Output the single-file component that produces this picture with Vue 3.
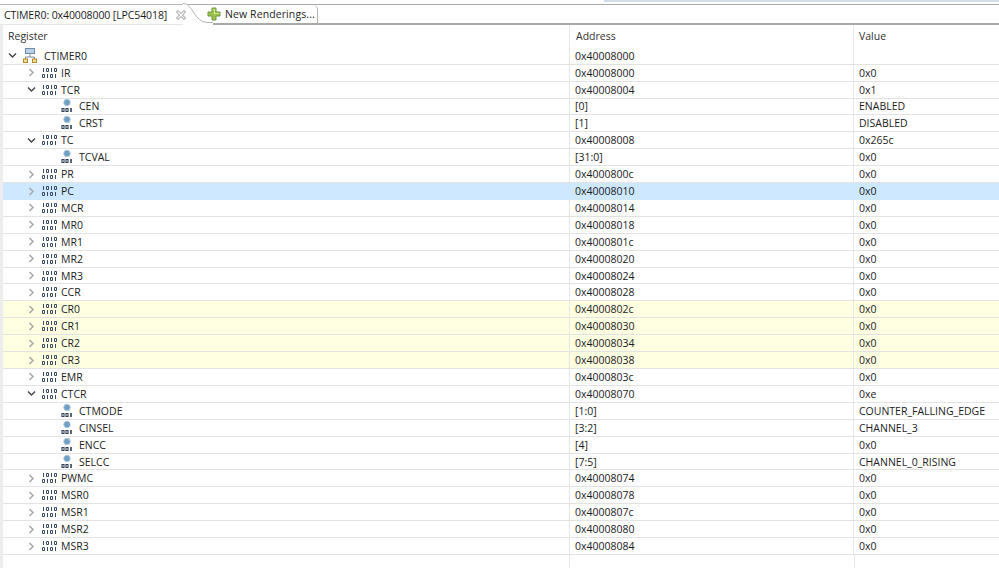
<script setup>
const rows = [
  { n: 'CTIMER0', a: '0x40008000', v: '', lvl: 0, open: true, kind: 'root' },
  { n: 'IR', a: '0x40008000', v: '0x0' },
  { n: 'TCR', a: '0x40008004', v: '0x1', open: true },
  { n: 'CEN', a: '[0]', v: 'ENABLED', kind: 'field' },
  { n: 'CRST', a: '[1]', v: 'DISABLED', kind: 'field' },
  { n: 'TC', a: '0x40008008', v: '0x265c', open: true },
  { n: 'TCVAL', a: '[31:0]', v: '0x0', kind: 'field' },
  { n: 'PR', a: '0x4000800c', v: '0x0' },
  { n: 'PC', a: '0x40008010', v: '0x0', sel: true },
  { n: 'MCR', a: '0x40008014', v: '0x0' },
  { n: 'MR0', a: '0x40008018', v: '0x0' },
  { n: 'MR1', a: '0x4000801c', v: '0x0' },
  { n: 'MR2', a: '0x40008020', v: '0x0' },
  { n: 'MR3', a: '0x40008024', v: '0x0' },
  { n: 'CCR', a: '0x40008028', v: '0x0' },
  { n: 'CR0', a: '0x4000802c', v: '0x0', warn: true },
  { n: 'CR1', a: '0x40008030', v: '0x0', warn: true },
  { n: 'CR2', a: '0x40008034', v: '0x0', warn: true },
  { n: 'CR3', a: '0x40008038', v: '0x0', warn: true },
  { n: 'EMR', a: '0x4000803c', v: '0x0' },
  { n: 'CTCR', a: '0x40008070', v: '0xe', open: true },
  { n: 'CTMODE', a: '[1:0]', v: 'COUNTER_FALLING_EDGE', kind: 'field' },
  { n: 'CINSEL', a: '[3:2]', v: 'CHANNEL_3', kind: 'field' },
  { n: 'ENCC', a: '[4]', v: '0x0', kind: 'field' },
  { n: 'SELCC', a: '[7:5]', v: 'CHANNEL_0_RISING', kind: 'field' },
  { n: 'PWMC', a: '0x40008074', v: '0x0' },
  { n: 'MSR0', a: '0x40008078', v: '0x0' },
  { n: 'MSR1', a: '0x4000807c', v: '0x0' },
  { n: 'MSR2', a: '0x40008080', v: '0x0' },
  { n: 'MSR3', a: '0x40008084', v: '0x0' },
]
</script>

<template>
  <div class="app">
    <div class="topstrip"><span class="ts-a"></span><span class="ts-b"><i class="ts-blue"></i></span></div>
    <div class="tabbar">
      <div class="tab active">
        <span class="tab-title">CTIMER0: 0x40008000 [LPC54018]</span>
        <svg class="close" width="12" height="12" viewBox="0 0 12 12">
          <path d="M1.5 3L3 1.5L6 4.5L9 1.5L10.5 3L7.5 6L10.5 9L9 10.5L6 7.5L3 10.5L1.5 9L4.5 6Z" fill="#fff" stroke="#8f8f8f" stroke-width="1" />
        </svg>
      </div>
      <svg class="curve" width="30" height="22" viewBox="0 0 30 22">
        <path d="M0 0H1C9 0 12 19 24 19H30V22H0Z" fill="#fff" />
        <path d="M0 0.5H1C9 0.5 12 19.5 24 19.5H30" fill="none" stroke="#b4b4b4" />
      </svg>
      <div class="tab other">
        <svg class="plus" width="14" height="14" viewBox="0 0 14 14">
          <path d="M5 1h4v4h4v4H9v4H5V9H1V5h4z" fill="#9bc24a" stroke="#6f9a3a" stroke-width="1" />
          <path d="M6 2h2v4h4v1H7V3H6z" fill="#d5e89a" />
        </svg>
        <span class="other-title">New Renderings...</span>
      </div>
      <div class="tab-rest"></div>
    </div>
    <div class="table">
      <div class="thead">
        <div class="th c1">Register</div>
        <div class="th c2">Address</div>
        <div class="th c3">Value</div>
      </div>
      <div class="tbody">
        <div
          v-for="r in rows"
          :key="r.n"
          class="row"
          :class="{ sel: r.sel, warn: r.warn, root: r.kind === 'root' }"
        >
          <div class="cell c1 name" :class="r.kind === 'root' ? 'lv0' : r.kind === 'field' ? 'lv2' : 'lv1'">
            <svg v-if="r.kind !== 'field'" class="twist" width="9" height="9" viewBox="0 0 9 9">
              <path v-if="r.open" d="M1 2.5L4.5 6L8 2.5" fill="none" stroke="#444" stroke-width="1.4" />
              <path v-else d="M2.5 1L6 4.5L2.5 8" fill="none" stroke="#a8a8a8" stroke-width="1.5" />
            </svg>
            <svg v-if="r.kind === 'root'" class="ico" width="15" height="15" viewBox="0 0 15 15">
              <rect x="2.5" y="0.5" width="9" height="5" fill="#b9cfe6" stroke="#6f8cb0" />
              <path d="M7 6v3M2.5 11V9h9v2" fill="none" stroke="#7d8a9a" />
              <rect x="0.5" y="11" width="4" height="3.5" fill="#f4dc90" stroke="#b8892f" />
              <rect x="9.5" y="11" width="4" height="3.5" fill="#f4dc90" stroke="#b8892f" />
            </svg>
            <svg v-else-if="r.kind === 'field'" class="ico" width="12" height="16" viewBox="0 0 12 16">
              <circle cx="6" cy="4.5" r="3.2" fill="#6f9fc2" stroke="#a9c6da" />
              <path d="M1 10.5h2v3H1zM5 10.5h2v3H5z" fill="none" stroke="#2f3f55" stroke-width="1.1" />
              <path d="M10 10v4" stroke="#2f3f55" stroke-width="1.6" />
            </svg>
            <svg v-else class="ico" width="16" height="10" viewBox="0 0 16 10">
              <g fill="none" stroke="#3a4a60" stroke-width="1">
                <path d="M1.5 0v4M9.5 0v4" />
                <path d="M4.5 .5h2v3h-2zM12.5 .5h2v3h-2z" />
                <path d="M.5 6.5h2v3h-2zM8.5 6.5h2v3h-2z" />
                <path d="M5.5 6v4M13.5 6v4" />
              </g>
            </svg>
            <span class="label">{{ r.n }}</span>
          </div>
          <div class="cell c2">{{ r.a }}</div>
          <div class="cell c3">{{ r.v }}</div>
        </div>
      </div>
      <div class="empty"><span class="e1"></span><span class="e2"></span></div>
    </div>
  </div>
</template>

<style>
html, body { margin: 0; background: #fff; overflow: hidden; }
</style>

<style scoped>
.app {
  width: 999px;
  height: 568px;
  position: relative;
  overflow: hidden;
  font-family: "Open Sans", "Noto Sans", sans-serif;
  font-size: 10.5px;
  color: #1c1c1c;
  background: #fff;
  display: flex;
  flex-direction: column;
}
.topstrip { height: 5px; display: flex; flex: none; }
.ts-a { width: 183px; background: #fff; border-bottom: 1px solid #b8b8b8; box-sizing: border-box; }
.ts-b { flex: 1; background: #fff; border-bottom: 1px solid #a9a9a9; box-sizing: border-box; position: relative; }
.ts-blue { position: absolute; left: 421px; right: 0; top: 0; height: 2px; background: #d3dde9; }
.tabbar {
  height: 18px;
  flex: none;
  display: flex;
  align-items: stretch;
  border-bottom: 2px solid #a9a9a9;
  position: relative;
}
.tab { display: flex; align-items: center; white-space: nowrap; }
.tab.active {
  width: 195px;
  padding-left: 4px;
  box-sizing: border-box;
  gap: 8px;
  background: #fff;
  margin-bottom: -2px;
  border-bottom: 1px solid #e6e6e6;
}
.tab-title { letter-spacing: -0.1px; }
.close { position: relative; z-index: 4; flex: none; }
.curve { flex: none; margin: -2px 0 -2px -12px; position: relative; z-index: 3; }
.tab.other {
  width: 117px;
  box-sizing: border-box;
  padding-left: 6px;
  gap: 4px;
  margin-left: -12px;
  position: relative;
  z-index: 4;
  border-right: 1px solid #b4b4b4;
  border-top-right-radius: 5px;
}
.other-title { letter-spacing: 0.1px; }
.plus { flex: none; }
.tab-rest { flex: 1; }
.table { flex: 1; margin-left: 3px; display: flex; flex-direction: column; min-height: 0; }
.app::before {
  content: "";
  position: absolute;
  left: 0;
  top: 25px;
  bottom: 0;
  width: 3px;
  background: #ededed;
}
.thead { display: flex; height: 22.8px; flex: none; align-items: center; }
.th { padding-left: 5px; box-sizing: border-box; height: 100%; display: flex; align-items: center; color: #333; }
.th.c2, .th.c3 { padding-left: 6px; border-left: 1px solid #e8e8e8; }
.th.c3 { padding-left: 5px; }
.c1 { width: 566px; flex: none; }
.c2 { width: 284px; flex: none; }
.c3 { flex: 1; }
.tbody { display: grid; grid-auto-rows: 16.92px; flex: none; }
.row { display: flex; align-items: stretch; border-bottom: 1px solid #e3e3e3; box-sizing: border-box; }
.row.sel { background: #cde8ff; border-bottom-color: #cde8ff; }
.row.warn { background: #ffffe1; }
.cell { display: flex; align-items: center; box-sizing: border-box; white-space: nowrap; overflow: hidden; }
.cell.c2, .cell.c3 { border-left: 1px solid #e8e8e8; padding-left: 5px; }
.row.sel .cell { border-left-color: #cde8ff; }
.name { position: relative; }
.lv0 { padding-left: 5px; }
.lv1 { padding-left: 24px; }
.lv2 { padding-left: 58px; }
.twist { flex: none; margin-right: 6px; }
.ico { flex: none; }
.lv0 .ico { margin-right: 6px; margin-left: 0; }
.lv1 .ico { margin-right: 3px; }
.lv2 .ico { margin-right: 6px; }
.empty { flex: 1; display: flex; }
.e1 { width: 566px; }
.e2 { width: 284px; border-left: 1px solid #e8e8e8; border-right: 1px solid #e8e8e8; }
</style>
